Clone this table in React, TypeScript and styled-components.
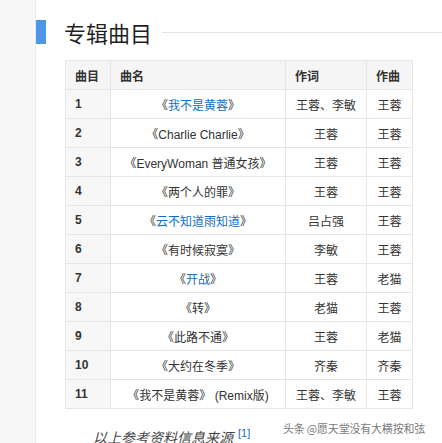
import styled, { createGlobalStyle } from 'styled-components';

const GlobalStyle = createGlobalStyle`
  html, body {
    margin: 0;
    padding: 0;
    background: #ffffff;
  }
  body {
    font-family: "Liberation Sans", Arial, "Noto Sans CJK SC", sans-serif;
    color: #333333;
  }
`;

const Page = styled.div`
  display: flex;
  width: 442px;
  height: 443px;
  overflow: hidden;
  position: relative;
`;

const Side = styled.div`
  width: 35px;
  flex-shrink: 0;
  background: #f7f7f7;
  border-right: 1px solid #ececec;
`;

const Main = styled.div`
  flex: 1;
  padding-top: 20px;
`;

const TitleRow = styled.div`
  display: flex;
  align-items: center;
  height: 24px;
`;

const TitleBar = styled.span`
  width: 10px;
  height: 24px;
  background: #4f96e8;
`;

const Title = styled.h2`
  margin: 0 10px 0 18px;
  font-size: 22px;
  font-weight: normal;
  color: #1f1f1f;
  font-family: "Noto Sans CJK SC", sans-serif;
  line-height: 24px;
`;

const TitleLine = styled.span`
  flex: 1;
  height: 1px;
  background: #e2e2e2;
`;

const Table = styled.table`
  margin: 16px 0 0 29px;
  border-collapse: collapse;
  font-size: 12px;
  font-family: "Liberation Sans", "Noto Sans CJK SC", sans-serif;
`;

const Th = styled.th<{ $w: number }>`
  width: ${(p) => p.$w}px;
  height: 29px;
  padding: 0 0 0 9px;
  box-sizing: border-box;
  text-align: left;
  font-weight: bold;
  background: #f5f5f5;
  border: 1px solid #e6e6e6;
  color: #333;
`;

const Td = styled.td<{ $num?: boolean }>`
  height: 29px;
  padding: 0 ${(p) => (p.$num ? '0 0 9px' : '4px')};
  box-sizing: border-box;
  text-align: ${(p) => (p.$num ? 'left' : 'center')};
  font-weight: ${(p) => (p.$num ? 'bold' : 'normal')};
  background: ${(p) => (p.$num ? '#f7f7f7' : '#ffffff')};
  border: 1px solid #e6e6e6;
  color: #333;
  white-space: nowrap;
`;

const SongLink = styled.a`
  color: #136ec2;
  text-decoration: none;
`;

const Source = styled.div`
  margin: 18px 0 0 57px;
  font-size: 14px;
  font-style: italic;
  font-weight: normal;
  color: #444;
`;

const Ref = styled.sup`
  font-style: normal;
  font-size: 11px;
  color: #136ec2;
  margin-left: 5px;
`;

const Watermark = styled.div`
  position: absolute;
  left: 283px;
  top: 420px;
  font-size: 11px;
  color: #7a7a7a;
  text-shadow: 0 0 2px #fff, 0 0 2px #fff;
  font-family: "Noto Sans CJK SC", sans-serif;
  letter-spacing: -0.2px;
`;

type Song = { no: number; name: string; link?: boolean; extra?: string; lyric: string; music: string };

const songs: Song[] = [
  { no: 1, name: '我不是黄蓉', link: true, lyric: '王蓉、李敏', music: '王蓉' },
  { no: 2, name: 'Charlie Charlie', lyric: '王蓉', music: '王蓉' },
  { no: 3, name: 'EveryWoman 普通女孩', lyric: '王蓉', music: '王蓉' },
  { no: 4, name: '两个人的罪', lyric: '王蓉', music: '王蓉' },
  { no: 5, name: '云不知道雨知道', link: true, lyric: '吕占强', music: '王蓉' },
  { no: 6, name: '有时候寂寞', lyric: '李敏', music: '王蓉' },
  { no: 7, name: '开战', link: true, lyric: '王蓉', music: '老猫' },
  { no: 8, name: '转', lyric: '老猫', music: '王蓉' },
  { no: 9, name: '此路不通', lyric: '王蓉', music: '老猫' },
  { no: 10, name: '大约在冬季', lyric: '齐秦', music: '齐秦' },
  { no: 11, name: '我不是黄蓉', extra: ' (Remix版)', lyric: '王蓉、李敏', music: '王蓉' },
];

const App = () => {
  return (
    <Page>
      <GlobalStyle />
      <Side />
      <Main>
        <TitleRow>
          <TitleBar />
          <Title>专辑曲目</Title>
          <TitleLine />
        </TitleRow>
        <Table>
          <thead>
            <tr>
              <Th $w={45}>曲目</Th>
              <Th $w={175}>曲名</Th>
              <Th $w={81}>作词</Th>
              <Th $w={46}>作曲</Th>
            </tr>
          </thead>
          <tbody>
            {songs.map((s) => (
              <tr key={s.no}>
                <Td $num>{s.no}</Td>
                <Td>
                  《{s.link ? <SongLink href="#">{s.name}</SongLink> : s.name}》{s.extra}
                </Td>
                <Td>{s.lyric}</Td>
                <Td>{s.music}</Td>
              </tr>
            ))}
          </tbody>
        </Table>
        <Source>
          以上参考资料信息来源<Ref>[1]</Ref>
        </Source>
      </Main>
      <Watermark>头条 @愿天堂没有大横按和弦</Watermark>
    </Page>
  );
};

export default App;
